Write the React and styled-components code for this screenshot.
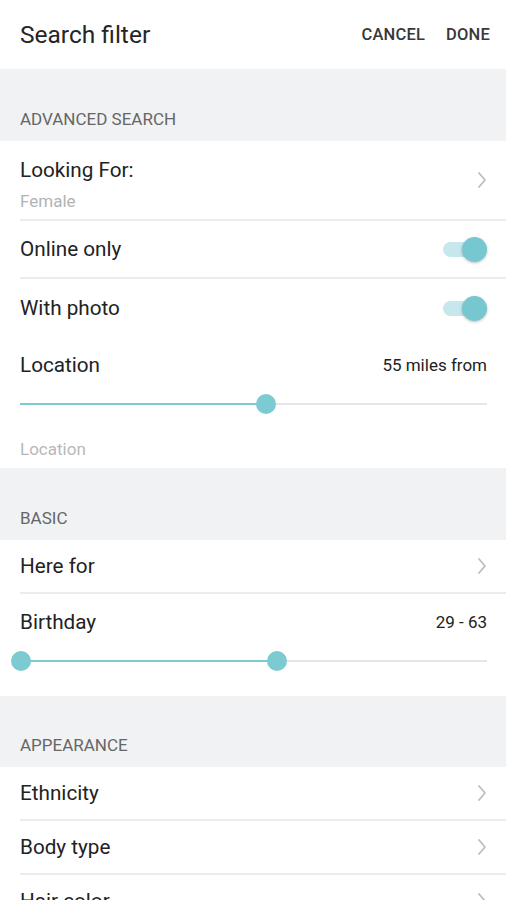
import React from "react";
import styled, { createGlobalStyle } from "styled-components";

const Global = createGlobalStyle`
  html, body { margin: 0; padding: 0; background: #ffffff; }
  body { font-family: Roboto, "Noto Sans", Arial, sans-serif; -webkit-font-smoothing: antialiased; }
  * { box-sizing: border-box; }
`;

const Page = styled.div`
  width: 506px;
  height: 900px;
  overflow: hidden;
  background: #f1f2f4;
  display: flex;
  flex-direction: column;
`;

const Header = styled.header`
  height: 69px;
  flex: none;
  background: #fff;
  display: flex;
  align-items: center;
  padding: 0 16px 0 20px;
`;

const Title = styled.h1`
  margin: 0;
  flex: 1;
  font-size: 24.5px;
  font-weight: 400;
  color: #262626;
`;

const Action = styled.button`
  border: 0;
  background: none;
  padding: 0;
  margin-left: ${p => p.$gap || 0}px;
  font-family: inherit;
  font-size: 16.5px;
  font-weight: 500;
  color: #383838;
  letter-spacing: 0.2px;
`;

const SectionHead = styled.div`
  height: ${p => p.$h || 72}px;
  flex: none;
  display: flex;
  align-items: flex-end;
  padding: 0 20px 12px;
  font-size: 17px;
  color: #666;
`;

const Card = styled.section`
  background: #fff;
  display: flex;
  flex-direction: column;
  padding-bottom: ${p => p.$pb || 0}px;
  flex: none;
`;

const Row = styled.div`
  height: ${p => p.$h}px;
  display: flex;
  align-items: center;
  margin-left: 20px;
  padding-right: 19px;
  border-bottom: ${p => (p.$line ? "2px solid #ececec" : "0")};
`;

const Labels = styled.div`
  flex: 1;
  display: flex;
  flex-direction: column;
  align-self: ${p => (p.$top ? "flex-start" : "center")};
  padding-top: ${p => (p.$top ? 17 : 0)}px;
`;

const Label = styled.div`
  font-size: 20.7px;
  line-height: 24px;
  color: #222;
`;

const Sub = styled.div`
  font-size: 17px;
  line-height: 20px;
  color: #b3b3b3;
  margin-top: 9px;
`;

const Value = styled.div`
  font-size: 17px;
  color: #222;
`;

const Chevron = () => (
  <svg width="10" height="18" viewBox="0 0 10 18" fill="none">
    <path d="M2 2l6 7-6 7" stroke="#bdbdbd" strokeWidth="1.8" strokeLinecap="round" strokeLinejoin="round" />
  </svg>
);

const Track = styled.div`
  position: relative;
  width: 44px;
  height: 15px;
  border-radius: 8px;
  background: #c6e8ec;
`;

const Knob = styled.div`
  position: absolute;
  right: 0;
  top: 50%;
  width: 25px;
  height: 25px;
  margin-top: -12.5px;
  border-radius: 50%;
  background: #77c7d0;
  box-shadow: 0 1px 3px rgba(0, 0, 0, 0.25);
`;

const Toggle = () => (
  <Track>
    <Knob />
  </Track>
);

const SliderWrap = styled.div`
  position: relative;
  height: 22px;
  margin: ${p => p.$m};
`;

const Rail = styled.div`
  position: absolute;
  left: 0;
  right: 0;
  top: 10px;
  height: 2px;
  background: #e6e6e6;
`;

const Fill = styled.div`
  position: absolute;
  top: 10px;
  height: 2px;
  background: #7ccad2;
`;

const Thumb = styled.div`
  position: absolute;
  top: 1px;
  width: 20px;
  height: 20px;
  margin-left: -10px;
  border-radius: 50%;
  background: #7ccad2;
`;

const Slider = ({ from, to, m, startThumb }) => (
  <SliderWrap $m={m}>
    <Rail />
    <Fill style={{ left: from, width: to - from }} />
    {startThumb && <Thumb style={{ left: from }} />}
    <Thumb style={{ left: to }} />
  </SliderWrap>
);

const Placeholder = styled.div`
  font-size: 17px;
  line-height: 20px;
  color: #b8b8b8;
  padding: 0 20px 9px;
  height: 53px;
  display: flex;
  align-items: flex-end;
`;

export default function App() {
  return (
    <>
      <Global />
      <Page>
        <Header>
          <Title>Search filter</Title>
          <Action>CANCEL</Action>
          <Action $gap={21}>DONE</Action>
        </Header>

        <SectionHead>ADVANCED SEARCH</SectionHead>
        <Card>
          <Row $h={80} $line>
            <Labels $top>
              <Label>Looking For:</Label>
              <Sub>Female</Sub>
            </Labels>
            <Chevron />
          </Row>
          <Row $h={58} $line>
            <Labels><Label>Online only</Label></Labels>
            <Toggle />
          </Row>
          <Row $h={58}>
            <Labels><Label>With photo</Label></Labels>
            <Toggle />
          </Row>
          <Row $h={56}>
            <Labels><Label>Location</Label></Labels>
            <Value>55 miles from</Value>
          </Row>
          <Slider from={0} to={246} m="0 19px 0 20px" />
          <Placeholder>Location</Placeholder>
        </Card>

        <SectionHead>BASIC</SectionHead>
        <Card $pb={24}>
          <Row $h={54} $line>
            <Labels><Label>Here for</Label></Labels>
            <Chevron />
          </Row>
          <Row $h={56}>
            <Labels><Label>Birthday</Label></Labels>
            <Value>29 - 63</Value>
          </Row>
          <Slider from={0} to={256} m="0 19px 0 21px" startThumb />
        </Card>

        <SectionHead $h={71}>APPEARANCE</SectionHead>
        <Card>
          <Row $h={54} $line>
            <Labels><Label>Ethnicity</Label></Labels>
            <Chevron />
          </Row>
          <Row $h={54} $line>
            <Labels><Label>Body type</Label></Labels>
            <Chevron />
          </Row>
          <Row $h={54} $line>
            <Labels><Label>Hair color</Label></Labels>
            <Chevron />
          </Row>
        </Card>
      </Page>
    </>
  );
}
